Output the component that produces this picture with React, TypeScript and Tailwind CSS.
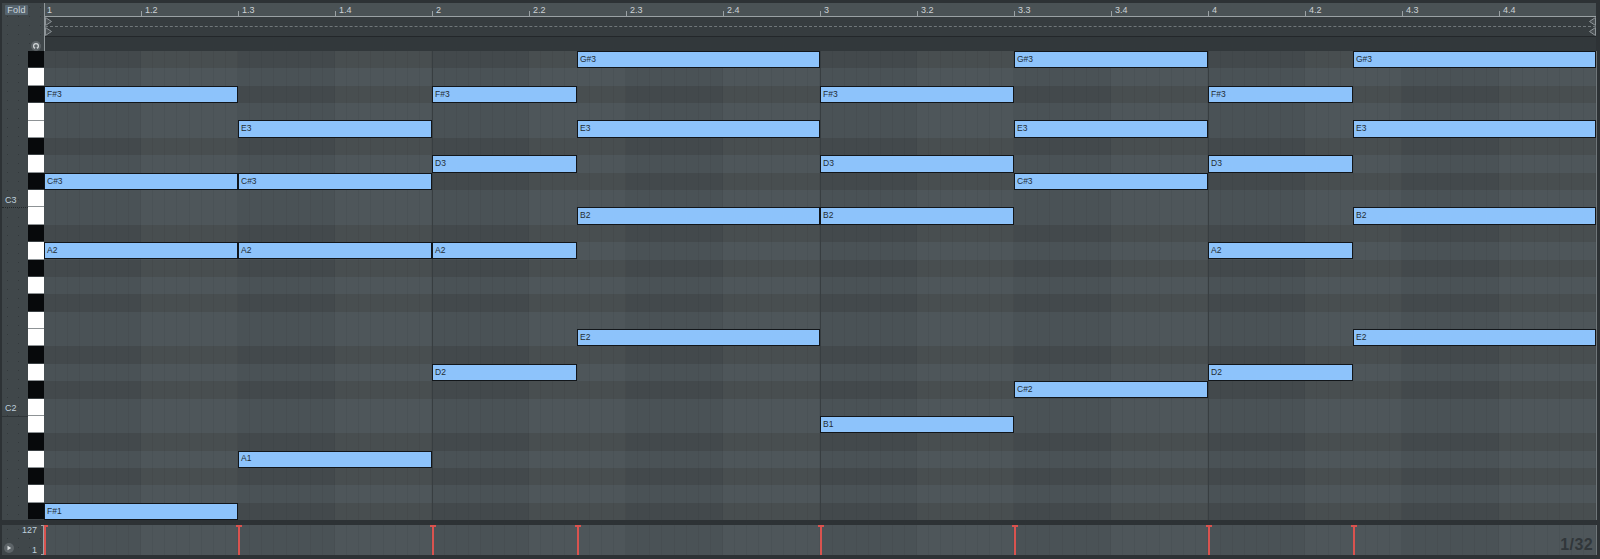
const BAR = 388;

const KEYS = [1, 0, 1, 0, 0, 1, 0, 1, 0, 0, 1, 0, 1, 0, 1, 0, 0, 1, 0, 1, 0, 0, 1, 0, 1, 0, 1];
const RULER = ["1", "1.2", "1.3", "1.4", "2", "2.2", "2.3", "2.4", "3", "3.2", "3.3", "3.4", "4", "4.2", "4.3", "4.4"];

// row = semitones below G#3, start/end in eighths of a bar from the left edge
const NOTES: { name: string; row: number; start: number; end: number }[] = [
  { name: "G#3", row: 0, start: 11, end: 16 },
  { name: "G#3", row: 0, start: 20, end: 24 },
  { name: "G#3", row: 0, start: 27, end: 32 },
  { name: "F#3", row: 2, start: 0, end: 4 },
  { name: "F#3", row: 2, start: 8, end: 11 },
  { name: "F#3", row: 2, start: 16, end: 20 },
  { name: "F#3", row: 2, start: 24, end: 27 },
  { name: "E3", row: 4, start: 4, end: 8 },
  { name: "E3", row: 4, start: 11, end: 16 },
  { name: "E3", row: 4, start: 20, end: 24 },
  { name: "E3", row: 4, start: 27, end: 32 },
  { name: "D3", row: 6, start: 8, end: 11 },
  { name: "D3", row: 6, start: 16, end: 20 },
  { name: "D3", row: 6, start: 24, end: 27 },
  { name: "C#3", row: 7, start: 0, end: 4 },
  { name: "C#3", row: 7, start: 4, end: 8 },
  { name: "C#3", row: 7, start: 20, end: 24 },
  { name: "B2", row: 9, start: 11, end: 16 },
  { name: "B2", row: 9, start: 16, end: 20 },
  { name: "B2", row: 9, start: 27, end: 32 },
  { name: "A2", row: 11, start: 0, end: 4 },
  { name: "A2", row: 11, start: 4, end: 8 },
  { name: "A2", row: 11, start: 8, end: 11 },
  { name: "A2", row: 11, start: 24, end: 27 },
  { name: "E2", row: 16, start: 11, end: 16 },
  { name: "E2", row: 16, start: 27, end: 32 },
  { name: "D2", row: 18, start: 8, end: 11 },
  { name: "D2", row: 18, start: 24, end: 27 },
  { name: "C#2", row: 19, start: 20, end: 24 },
  { name: "B1", row: 21, start: 16, end: 20 },
  { name: "A1", row: 23, start: 4, end: 8 },
  { name: "F#1", row: 26, start: 0, end: 4 },
];

const MARKERS = [0, 4, 8, 11, 16, 20, 24, 27];

const eighth = (n: number) => Math.floor((n * BAR) / 8);

function GridColumns() {
  return (
    <div className="pointer-events-none absolute inset-0 flex">
      {RULER.map((label, i) => (
        <div
          key={label}
          className={`flex w-[97px] shrink-0 ${i % 2 ? "bg-white/[0.028]" : ""} ${i % 4 === 0 && i > 0 ? "border-l border-[#383e41]" : ""}`}
        >
          {Array.from({ length: 8 }).map((_, j) => (
            <div key={j} className="flex-1 border-r border-black/[0.04]" />
          ))}
        </div>
      ))}
    </div>
  );
}

function Lane({ border }: { border: string }) {
  return (
    <div className={`relative h-[10px] bg-[#363c3f] ${border}`}>
      <svg className="absolute left-0 top-0" width="8" height="10" viewBox="0 0 8 10" fill="none">
        <path d="M0.5 0.5 L6.5 4.5 L0.5 8.5 Z" stroke="#8d9498" fill="#4a5053" />
      </svg>
      <svg className="absolute right-0 top-0" width="8" height="10" viewBox="0 0 8 10" fill="none">
        <path d="M7.5 0.5 L1.5 4.5 L7.5 8.5 Z" stroke="#8d9498" fill="#4a5053" />
      </svg>
    </div>
  );
}

const panel = "bg-[#40474a] bg-[radial-gradient(#33393c_0.6px,transparent_0.7px)] bg-[size:11px_9px]";

export default function App() {
  return (
    <div className="flex h-[559px] w-[1600px] flex-col overflow-hidden bg-[#2d3235] pl-[2px] font-['Liberation_Sans',Arial,sans-serif]">
      <div className="h-[3px] shrink-0" />

      {/* ruler + automation lanes */}
      <div className="flex h-[48px] shrink-0">
        <div className={`relative w-[42px] shrink-0 ${panel}`}>
          <div className="absolute left-[3px] top-[2px] flex h-[10px] w-[23px] items-center justify-center rounded-[1px] bg-[#56646e] text-[9px] font-medium leading-none tracking-[0.3px] text-[#cdd7de]">
            Fold
          </div>
          <svg className="absolute left-[29px] top-[38px]" width="10" height="10" viewBox="0 0 10 10" fill="none">
            <circle cx="5" cy="5" r="5" fill="#5d6468" />
            <circle cx="5" cy="5" r="2.4" stroke="#d5d9db" strokeWidth="1.2" />
            <rect x="4" y="6.6" width="2" height="1.4" fill="#5d6468" />
          </svg>
        </div>
        <div className="w-[1552px] shrink-0 border-l border-[#8f9699]">
          <div className="flex h-[14px] border-b border-[#9aa1a4] bg-[#4a5255]">
            {RULER.map((label, i) => (
              <div key={label} className={`flex shrink-0 items-end ${i === 0 ? "w-[96px]" : "w-[97px]"}`}>
                {i > 0 && <div className="h-[5px] w-px shrink-0 bg-[#9aa1a4]" />}
                <span className={`text-[9px] leading-none text-[#cdd3d6] ${i === 0 ? "pl-[2px]" : "pl-[3px]"} pb-[1px]`}>{label}</span>
              </div>
            ))}
          </div>
          <Lane border="border-b border-dashed border-[#70777a]" />
          <Lane border="border-b border-[#23272a]" />
          <div className="h-[14px] bg-[#32383b]" />
        </div>
        <div className="w-[4px] shrink-0 bg-[#2d3235]" />
      </div>

      {/* piano roll */}
      <div className="flex h-[469px] shrink-0">
        <div className={`relative w-[26px] shrink-0 ${panel}`}>
          <span className="absolute left-[3px] top-[145px] text-[9px] leading-none text-[#bfd0dc]">C3</span>
          <div className="absolute inset-x-0 top-[156px] border-t border-dotted border-[#23282a]" />
          <span className="absolute left-[3px] top-[353px] text-[9px] leading-none text-[#bfd0dc]">C2</span>
          <div className="absolute inset-x-0 top-[365px] border-t border-[#2f3538]" />
        </div>
        <div className="flex w-[16px] shrink-0 flex-col bg-[#40474a]">
          {KEYS.map((black, i) => (
            <div
              key={i}
              className={`flex-1 ${black ? "bg-[#07090b] border-b border-[#3a4043]" : "bg-white border-b border-[#8d9295]"}`}
            />
          ))}
        </div>
        <div className="relative w-[1552px] shrink-0 overflow-hidden">
          <div className="flex h-full flex-col">
            {KEYS.map((black, i) => (
              <div key={i} className={`flex-1 ${black ? "bg-[#43494c]" : "bg-[#4a5256]"}`} />
            ))}
          </div>
          <GridColumns />
          {NOTES.map((note) => (
            <div
              key={`${note.name}-${note.start}`}
              className="absolute flex items-center border border-[#12161a] bg-[#8dc3fb] pb-[1px] pl-[2px] text-[8.5px] leading-none text-[#232c33]"
              style={{
                top: (note.row * 469) / 27,
                height: 469 / 27,
                left: eighth(note.start),
                width: eighth(note.end) - eighth(note.start),
              }}
            >
              {note.name}
            </div>
          ))}
        </div>
        <div className="w-[1px] shrink-0 bg-[#6f7679]" />
      </div>

      <div className="h-[5px] shrink-0 bg-[#2d3235]" />

      {/* velocity lane */}
      <div className="flex h-[30px] shrink-0">
        <div className={`relative w-[42px] shrink-0 ${panel}`}>
          <span className="absolute right-[7px] top-[1px] text-[9px] leading-none text-[#bfd0dc]">127</span>
          <span className="absolute bottom-[0px] right-[7px] text-[9px] leading-none text-[#bfd0dc]">1</span>
          <div className="absolute right-0 top-0 h-full w-[3px] border-y border-r border-[#9aa1a4]" />
          <svg className="absolute left-[2px] top-[18px]" width="10" height="10" viewBox="0 0 10 10">
            <circle cx="5" cy="5" r="5" fill="#5d6468" />
            <path d="M3.5 2.8 L7.2 5 L3.5 7.2 Z" fill="#d5d9db" />
          </svg>
        </div>
        <div className="relative w-[1552px] shrink-0 overflow-hidden bg-[#4a5256]">
          <GridColumns />
          {MARKERS.map((m) => (
            <div key={m} className="absolute top-0 h-full w-[2px] bg-[#d9534f]" style={{ left: eighth(m) }}>
              <div className="absolute -left-[2px] top-0 h-[2px] w-[6px] bg-[#d9534f]" />
            </div>
          ))}
          <span className="absolute bottom-[2px] right-[3px] text-[16px] font-bold leading-none tracking-wide text-[#31373a]">
            1/32
          </span>
        </div>
        <div className="w-[1px] shrink-0 bg-[#6f7679]" />
      </div>
    </div>
  );
}
